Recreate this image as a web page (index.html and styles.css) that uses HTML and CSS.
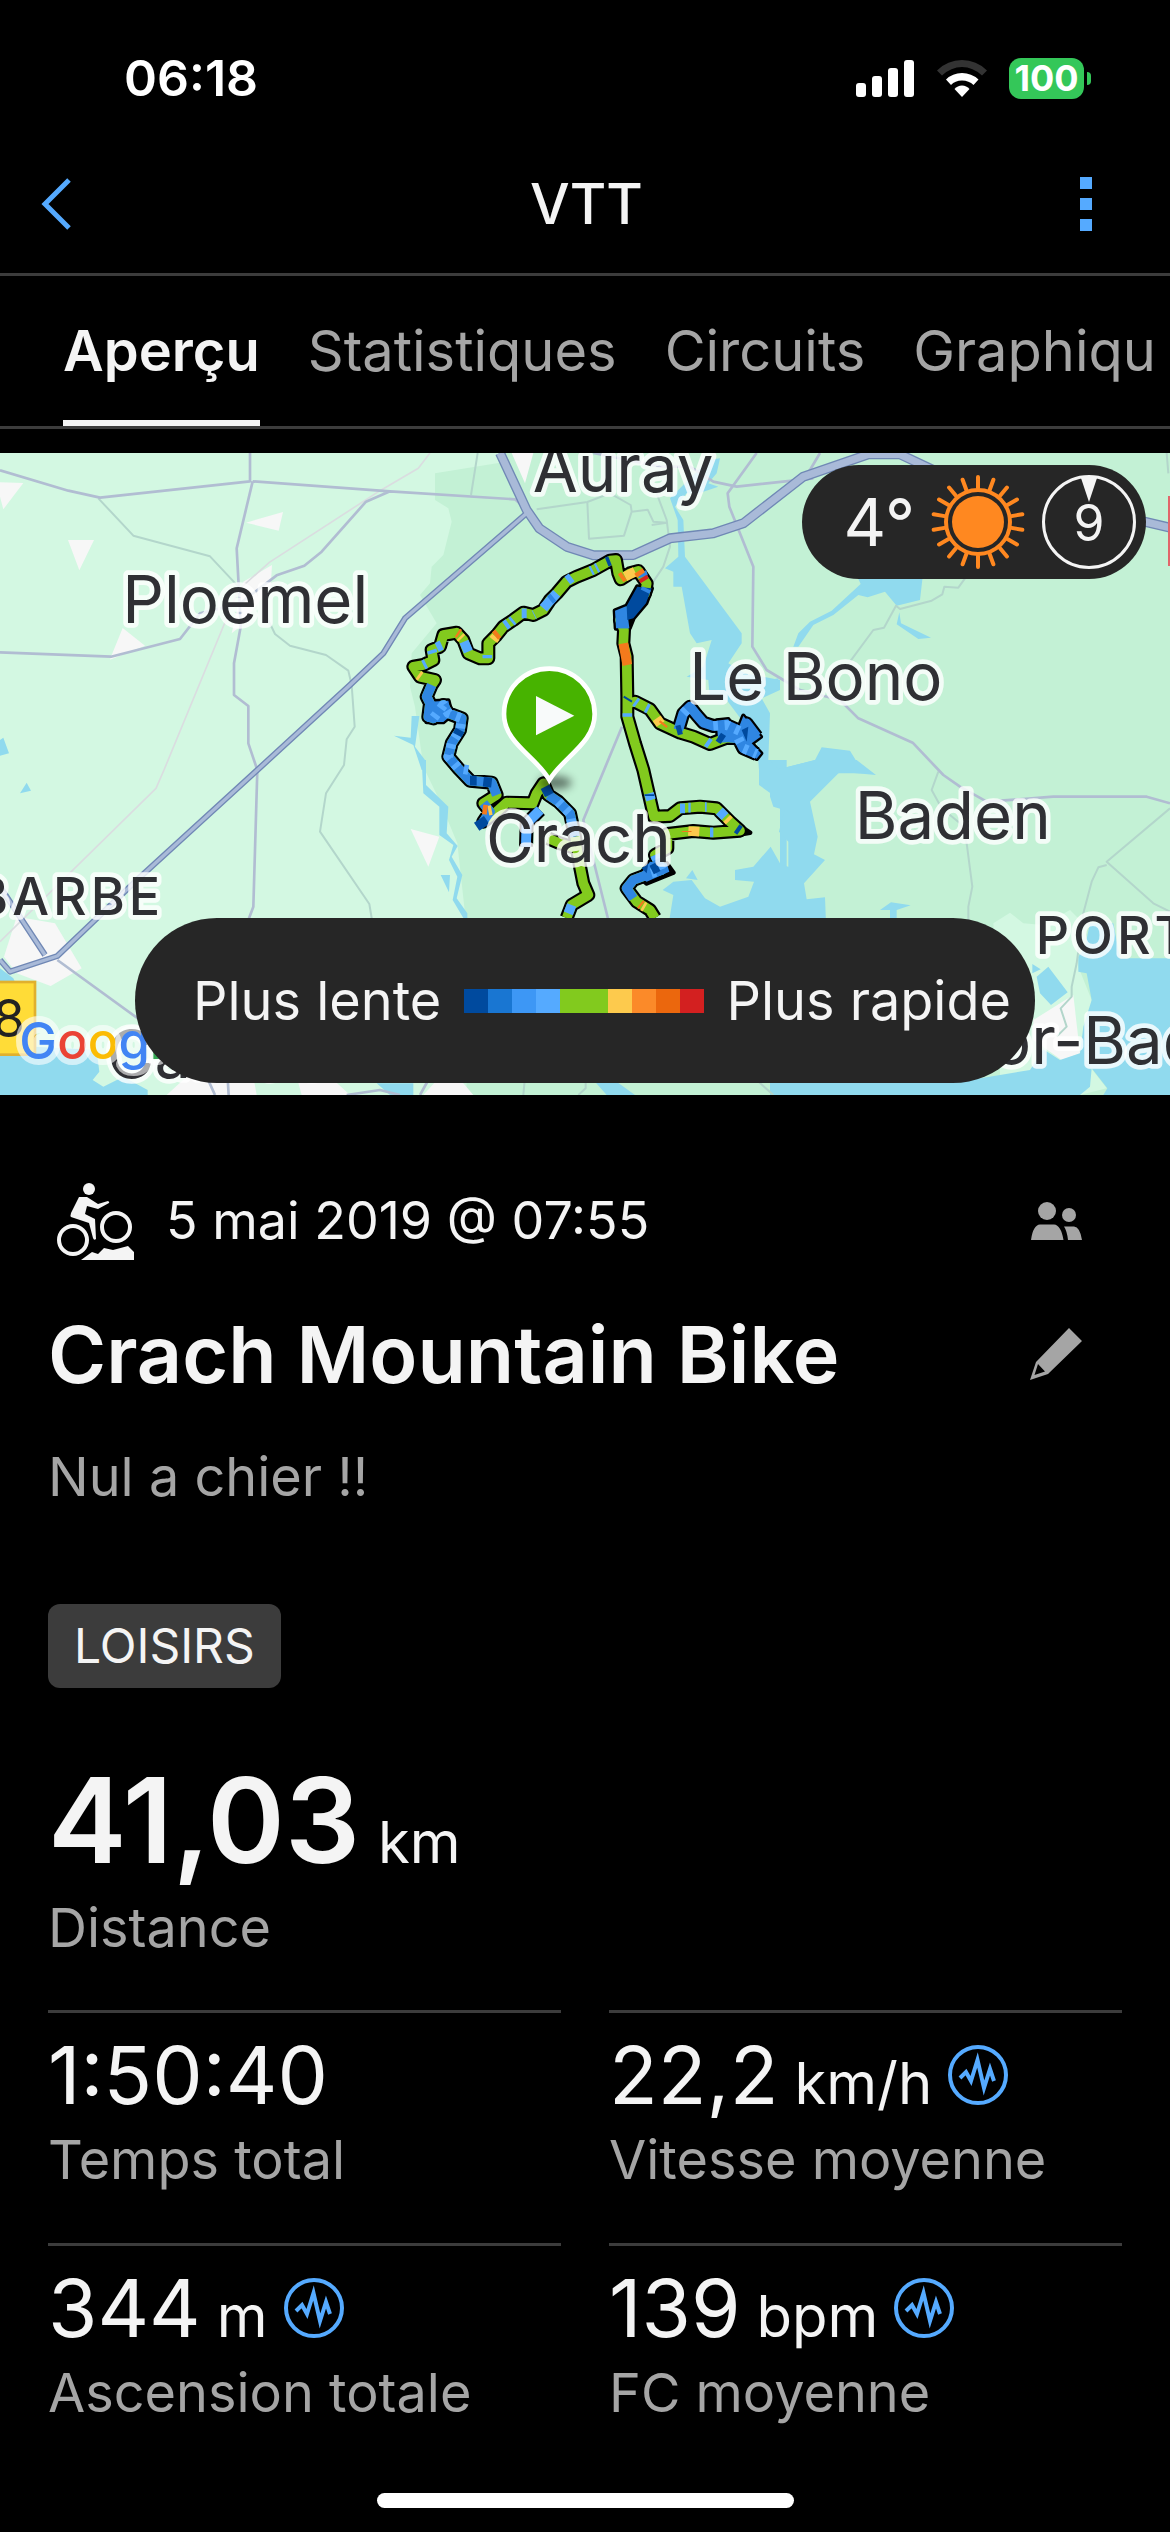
FILE: index.html
```html
<!DOCTYPE html>
<html lang="fr">
<head>
  <meta charset="UTF-8">
  <meta name="viewport" content="width=device-width">
  <title>VTT</title>
  <link rel="stylesheet" href="styles.css">
</head>
<body>
  <div class="status-bar">
    <span class="time">06:18</span>
    <div class="status-icons">
      <svg class="signal" viewBox="0 0 58 37" width="58" height="37" fill="#fff">
        <rect x="0" y="23" width="10" height="14" rx="3" />
        <rect x="16" y="16" width="10" height="21" rx="3" />
        <rect x="32" y="8" width="10" height="29" rx="3" />
        <rect x="48" y="0" width="10" height="37" rx="3" />
      </svg>
      <svg class="wifi" viewBox="0 0 50 37" width="50" height="37">
        <path d="M0 10.500Q10.500 0 25 0T50 10.500L45 15.500Q36 7 25 7T5 15.500Z" fill="#333" />
        <path d="M9 19.500Q15.500 13 25 13T41.500 19.500L36.500 25Q32 20.500 25 20.500T14 25Z" fill="#fff" />
        <path d="M17.500 29Q20.500 25.500 25 25.500T32.500 29L25 37Z" fill="#fff" />
      </svg>
      <span class="battery">100</span>
      <span class="battery-tip"></span>
    </div>
  </div>

  <header class="top-bar">
    <button class="icon-btn" aria-label="Retour">
      <svg viewBox="0 0 30 52" width="30" height="52" fill="none" stroke="#55aaff" stroke-width="5">
        <path d="M28 2L4 26L28 50" />
      </svg>
    </button>
    <h1>VTT</h1>
    <button class="icon-btn" aria-label="Menu">
      <svg viewBox="0 0 12 54" width="12" height="54" fill="#55aaff">
        <path d="M0 0h12v12H0zM0 21h12v12H0zM0 42h12v12H0z" />
      </svg>
    </button>
  </header>

  <nav class="tabs">
    <a class="tab active" href="#">Aperçu</a>
    <a class="tab" href="#">Statistiques</a>
    <a class="tab" href="#">Circuits</a>
    <a class="tab" href="#">Graphiqu</a>
  </nav>

  <section class="map">
    <svg class="map-canvas" viewBox="0 1359 3510 1926">
      <rect class="land" x="0" y="1359" width="3510" height="1926" />
      <path class="forest" d="M1305 1420L1500 1388V1359H3510V3285H1400L1395 2740L1372 2530L1318 2400L1270 2300L1245 2120L1230 2060L1235 1960L1310 1870L1260 1785L1290 1750L1295 1700L1330 1665L1355 1565L1345 1525L1305 1500Z" />
      <path class="land" d="M2980 2770L3030 2738L3070 2770L3130 2775L3210 2730L3240 2760L3235 2900L3275 3000L3270 3200L3320 3265L3240 3285H3000V3050Z" />

      <!-- built-up areas -->
      <g class="town">
        <path d="M0 1447L70 1449L10 1528L0 1490ZM204 1620H282L238 1711ZM738 1568L849 1536L836 1592ZM333 1970L368 1884L435 1937L330 1979ZM730 1745L816 1695L812 1760L720 1880L695 1900Z" />
        <path d="M50 2750L165 2770L245 2905L152 2958L50 2920L12 2870Z" />
        <path d="M1535 1359H1600L1575 1450ZM1232 2487L1318 2510L1285 2600ZM500 3285L560 3230H760L770 3285ZM890 3230H990L1050 3285H905Z" />
        <path d="M1270 3285L1320 3230L1390 3250L1420 3285ZM3100 3060L3220 2985L3240 3160L3185 3180L3100 3120Z" />
      </g>

      <!-- water -->
      <g class="water">
        <path transform="translate(1140 1320)" d="M985 60L1020 55L1010 100L985 130L1015 140L950 162L920 160L885 200L910 240L915 350L1085 580V610L1045 670L1095 700L1200 720V750L1145 775L1170 820L1165 960L1200 990H1137L1130 900L1040 780H990L985 720L920 710L970 680L995 600L950 610L930 580L905 440H880V395L855 385L895 350L893 240L870 175Z" />
        <path transform="translate(1140 1320)" d="M95 828H118L105 920L135 960V990H125L100 915L42 887L92 893Z" />
        <path transform="translate(2310 1320)" d="M262 410H458L450 480L380 497L345 455L293 472L265 465L190 525L130 555L85 620H70L85 580L120 545L185 512L272 432ZM388 517L393 550L483 593L445 597L380 553ZM0 1000V968L25 988L135 960L155 922L240 932L262 968L300 1000ZM0 720L25 715V745L0 760Z" />
        <path transform="translate(0 2280)" d="M0 625L40 655L60 700V860L105 860L290 870L298 935L278 960L310 980L370 950L443 990V1005H0ZM60 100L80 68L93 92ZM0 -60L10 -67L27 -20L0 -13ZM1130 970H1240V1005H1170Z" />
        <path transform="translate(1140 2280)" d="M125 0H138V75L205 140L200 220L233 258L215 290L247 345L230 415L262 460V474H250L218 420L232 350L207 300L220 255L178 225V140L130 100ZM182 345H210L207 397ZM918 355L937 330L953 360ZM645 965H710L765 1005H680Z" />
        <path transform="translate(1140 2280)" d="M1137 0H1220V480H868L880 405L848 390L880 365L935 360L975 415L1020 440L1105 410L1122 365L1065 360V330L1120 320L1172 260L1200 310V120L1137 75Z" />
        <path transform="translate(2310 2280)" d="M0 0L25 28L135 0H260L318 45L210 35L120 125L143 230L132 283L165 300L102 370L110 418L165 412L168 490H0V260L20 310L55 320V245L27 215L43 150L10 140L0 110ZM330 450L363 427L422 436L380 450V480H360V450ZM800 650L835 620L893 697L843 735L810 700ZM787 612L812 628L787 640Z" />
        <path transform="translate(2310 2280)" d="M925 635L950 640L965 720L940 800L930 880L870 900L820 868L780 930L600 960L0 965V1005H930L960 980L965 925L1012 985L1000 1005H1200V595H1050L1030 490H960L945 560L925 590Z" />
      </g>

      <!-- small roads -->
      <g class="road-minor">
        <path d="M295 1495L400 1607L630 1669L720 1765M800 1850L825 1902L870 1937L978 1965L1045 2012L1055 2055L1064 2180L1040 2218L1032 2295L978 2380L960 2495L1108 2712L1116 2760" />
        <path d="M1433 1359L1413 1485M1610 1528L1762 1506L1830 1480L1892 1515L1895 1535L1872 1607L1767 1616L1762 1506M1895 1535L1943 1529L1960 1565L2000 1568L1955 1575M1970 1480L2000 1560L2010 1640L1990 1700L1950 1760" />
        <path d="M2895 1735L2875 1763L2833 1760L2827 1783L2795 1802L2700 1827L2688 1817L2652 1883L2620 1890L2550 1985M3500 1359L3505 1420M2815 2315L2795 2370L2825 2425L2880 2470L2900 2530L2917 2660L2905 2720V2760" />
        <path d="M3510 2425L3320 2585L3460 2710L3510 2735M3320 2595L3295 2602L3275 2645L3250 2740L3230 2890L3215 2960V2990L3182 3025L3200 3080L3170 3110M1575 3230L1570 3285M1757 3230V3265L1735 3285M2270 3240L2320 3285" />
      </g>
      <g class="road-rail">
        <path d="M1290 1359L1255 1405L1140 1472L808 1687L715 1770L492 2310L468 2365L0 2825" />
      </g>

      <!-- main roads -->
      <g class="road">
        <path d="M0 1411L205 1472L300 1493L750 1444L750 1359M758 1444L1170 1474L1545 1498L1570 1520M758 1444L710 1645L720 1830L722 1880L702 1990V2085L745 2118V2230L772 2310L760 2720L745 2760M1170 1474L1098 1505L965 1655L913 1697L830 1726L720 1810L600 1840L540 1917L333 1970L0 1957" />
        <path d="M2270 1359L2183 1480L2188 1520L2260 1700L2257 1940L2300 2010L2400 2070L2520 2100L2575 2155L2738 2228L2830 2325L2880 2360L2960 2405L3160 2390H3440L3510 2410M1866 2180L1750 2460L1825 2760" />
        <path d="M1780 1359L1980 1400L2070 1400L2140 1445L2210 1460L2440 1435M2460 1359L2430 1410L2370 1470M172 2880L420 3060M1040 3285L1140 3270L1200 3285M620 3230L645 3285M683 3235L686 3285M1260 3285L1285 3240" />
      </g>
      <g class="road-case">
        <path d="M1500 1359L1580 1530L1618 1585L1700 1640L1780 1666L1900 1665L2010 1615L2140 1600L2230 1570L2410 1430L2605 1363H2700L2800 1410M3420 1562L3510 1583" stroke-width="30" />
        <path d="M1580 1540L1215 1855L1150 1960L1050 2055L772 2310L400 2650L172 2868L30 2915L0 2880M0 2660L135 2865" stroke-width="18" />
      </g>
      <g class="road-main">
        <path d="M1500 1359L1580 1530L1618 1585L1700 1640L1780 1666L1900 1665L2010 1615L2140 1600L2230 1570L2410 1430L2605 1363H2700L2800 1410M3420 1562L3510 1583" stroke-width="22" />
        <path d="M1580 1540L1215 1855L1150 1960L1050 2055L772 2310L400 2650L172 2868L30 2915L0 2880M0 2660L135 2865" stroke-width="10" />
      </g>
      <rect x="3504" y="1488" width="10" height="210" fill="#e2656a" />
      <rect x="-60" y="2946" width="165" height="218" fill="#ffdc37" stroke="#e0b02e" stroke-width="8" />
      <text class="road-number" x="-22" y="3112">8</text>

      <!-- GPS track -->
      <g transform="translate(1140 1320)">
        <g class="track-outline">
          <path d="M560 1434L575 1395L625 1365L610 1330L600 1280L585 1190L570 1120L535 1085L505 1065L490 1030L470 1060L458 1090L380 1088L350 1115L310 1145L330 1115L310 1090L350 1065L335 1028L270 1022L235 985L205 950L215 910L240 870L245 835L205 820L190 795L160 835L145 830L150 790L140 770L155 735L165 720L120 710L100 680L130 675L160 660L155 630L180 620L190 585L230 578L250 600L265 640L300 655L325 655L325 610L350 585L370 560L400 540L430 518L460 525L490 510L510 480L530 460L560 425L590 410L640 390L690 362L708 360L715 400L722 418L750 400L775 393L800 430L795 460L770 490L740 520L720 540L732 570L730 610L740 650L742 770L742 830L765 910L790 990L822 1130L870 1128L900 1105L960 1100L1010 1105L1050 1145L1080 1172L1000 1178L940 1173L862 1182V1225L825 1245L845 1290L800 1305L760 1320L740 1345L770 1385L810 1410L825 1434" />
          <path d="M745 790L765 785L810 808L840 850L900 878L940 890L990 912L1040 893L1075 895L1090 925L1130 942M895 870L910 820L930 800L950 825L970 848L1000 858L1040 855L1095 880L1100 850L1130 890M480 1110L440 1150L438 1220M505 1195L540 1210L590 1225" />
          <path class="knot-outline" d="M1010 842L1045 838L1052 866H1075L1090 828L1142 890L1115 910L1143 940L1130 956L1085 935L1070 905L1015 908ZM148 785L205 782L215 825L190 846H140ZM705 512L740 498L772 440L815 445L798 490L760 535L748 565H708ZM1075 1155L1110 1178L1070 1185ZM810 1265L860 1270L880 1298L800 1330L775 1310Z" />
        </g>
        <g class="track">
          <path class="t-green" d="M560 1434L575 1395L625 1365L610 1330L600 1280L585 1190L570 1120L535 1085L505 1065L490 1030L470 1060L458 1090L380 1088L350 1115L310 1145L330 1115L310 1090L350 1065L335 1028L270 1022L235 985L205 950L215 910L240 870L245 835L205 820L190 795L160 835L145 830L150 790L140 770L155 735L165 720L120 710L100 680L130 675L160 660L155 630L180 620L190 585L230 578L250 600L265 640L300 655L325 655L325 610L350 585L370 560L400 540L430 518L460 525L490 510L510 480L530 460L560 425L590 410L640 390L690 362L708 360L715 400L722 418L750 400L775 393L800 430L795 460L770 490L740 520L720 540L732 570L730 610L740 650L742 770L742 830L765 910L790 990L822 1130L870 1128L900 1105L960 1100L1010 1105L1050 1145L1080 1172L1000 1178L940 1173L862 1182V1225L825 1245L845 1290L800 1305L760 1320L740 1345L770 1385L810 1410L825 1434" />
          <path class="t-green" d="M745 790L765 785L810 808L840 850L900 878L940 890L990 912L1040 893L1075 895M505 1195L540 1210L590 1225" />
          <path class="t-blue" d="M350 1065L335 1028L270 1022L235 985L205 950L215 910L240 870L245 835L205 820L190 795L160 835L145 830L150 790L140 770L155 735M310 1145L330 1115L310 1090M585 1190L570 1120L535 1085L505 1065M480 1110L440 1150L438 1220M895 870L910 820L930 800L950 825L970 848L1000 858L1040 855L1095 880L1100 850L1130 890M1050 893L1075 895L1090 925L1130 942M825 1245L845 1290L800 1305L760 1320L740 1345L760 1375" />
          <path class="knot" d="M1010 842L1045 838L1052 866H1075L1090 828L1142 890L1115 910L1143 940L1130 956L1085 935L1070 905L1015 908ZM148 785L205 782L215 825L190 846H140ZM810 1265L860 1270L868 1295L800 1325L775 1310Z" />
          <path class="knot" d="M705 512L740 498L748 565H708Z" />
          <path class="knot-dark" d="M740 498L772 440L815 445L798 490L760 535L742 540ZM1085 870L1105 860L1100 905ZM785 1285L805 1270L800 1300Z" />
          <path class="t-light" stroke-dasharray="14 20" d="M265 990L235 985L205 950L215 910L240 870L245 835L205 820L190 795L160 835M575 1150L570 1120L535 1085M910 820L930 800M1000 858L1040 855L1095 880M1075 895L1090 925L1130 942M825 1245L845 1290L800 1305" />
          <path class="t-light" d="M130 675L138 671M158 640L155 630M170 622L185 615M252 605L265 635M322 645V655M375 557L385 550M394 545L400 540M425 520L440 520M462 525L464 524M490 505L530 460M562 422L575 412M632 393L638 390M648 385L654 382M765 785L772 790M798 803L806 807M742 820V830M980 905L990 912M807 1060L813 1080M900 1105H915M925 1103H932M975 1101H980M1018 1113L1035 1130M990 1177H1000M480 1110L440 1150L438 1220M565 1420L575 1395" />
          <path class="t-dark" d="M680 366L690 362M240 870L232 885M335 1028L310 1025M290 1022L270 1022M495 1040L508 1065M890 872L905 868M1015 890L1030 900M320 1140L290 1160M815 1290L835 1280M1070 1165L1080 1172M745 775L742 780M808 1063V1068" />
          <path class="t-blue" d="M720 540L730 530M732 560V565M785 395L790 410M800 445L795 455M510 480L520 472" />
          <path class="t-yellow" d="M115 705L122 710M240 590L245 595M340 600L348 590M735 410L765 395M830 835L842 852M925 1173L958 1175M1040 1135L1048 1143M325 1112L335 1110M788 1398L795 1402" />
          <path class="t-orange" d="M232 578L238 582M345 588L355 580M722 415L732 408M775 393L783 405M730 610L742 675M848 855L852 850M920 1173V1176M308 1108L322 1110M780 1392L785 1396" />
          <path class="t-red" d="M788 412L794 422" />
        </g>
      </g>

      <!-- place names -->
      <g class="place">
        <text x="1598" y="1475">Auray</text>
        <text x="367" y="1870">Ploemel</text>
        <text x="2068" y="2101">Le Bono</text>
        <text x="1458" y="2587">Crach</text>
        <text x="2564" y="2518">Baden</text>
        <text x="320" y="3234">Carnac</text>
        <text x="2976" y="3192">or-Baden</text>
      </g>
      <g class="place-caps">
        <text x="-78" y="2745">BARBE</text>
        <text x="3107" y="2862">PORT</text>
      </g>

      <!-- start pin -->
      <ellipse class="pin-shadow" cx="1665" cy="2348" rx="50" ry="20" />
      <path d="M1648 2340C1610 2270 1512 2230 1512 2142A136 136 0 0 1 1784 2142C1784 2230 1690 2270 1648 2340Z" fill="#47b300" stroke="#fff" stroke-width="14" />
      <path d="M1608 2088V2206L1723 2147Z" fill="#f8fafa" />

      <text class="google" x="58" y="3176"><tspan fill="#4285f4">G</tspan><tspan fill="#ea4335">o</tspan><tspan fill="#fbbc05">o</tspan><tspan fill="#4285f4">g</tspan><tspan fill="#34a853">l</tspan></text>
    </svg>

    <div class="weather">
      <span class="temp">4°</span>
      <svg class="sun" viewBox="-47 -47 94 94" width="94" height="94" fill="none" stroke="#ff8820" stroke-width="4">
        <circle r="26" fill="#ff8820" stroke="none" />
        <circle r="32" />
        <path id="rays" stroke-linecap="round" d="M0 -34V-45M0 34V45" />
        <use href="#rays" transform="rotate(20)" />
        <use href="#rays" transform="rotate(40)" />
        <use href="#rays" transform="rotate(60)" />
        <use href="#rays" transform="rotate(80)" />
        <use href="#rays" transform="rotate(100)" />
        <use href="#rays" transform="rotate(120)" />
        <use href="#rays" transform="rotate(140)" />
        <use href="#rays" transform="rotate(160)" />
      </svg>
      <span class="wind">
        <svg class="wind-arrow" viewBox="0 0 16 24" width="16" height="24"><path d="M0 0H16L8 24Z" fill="#f4f4f4" /></svg>
        9
      </span>
    </div>

    <div class="legend">
      <span>Plus lente</span>
      <div class="scale">
        <i class="c1"></i><i class="c2"></i><i class="c3"></i><i class="c4"></i><i class="c5"></i>
        <i class="c5"></i><i class="c6"></i><i class="c7"></i><i class="c8"></i><i class="c9"></i>
      </div>
      <span>Plus rapide</span>
    </div>
  </section>

  <main class="details">
    <div class="row">
      <svg class="bike" viewBox="0 0 80 78" width="80" height="78" fill="#f4f4f4">
        <circle cx="35" cy="7" r="6" />
        <path d="M25 15H33L44 22L54 19Q56 20 55 21L44 27L33 24L31 32L41 37L42 57Q40 59 39 56L35 41L17 35Q16 34 17 31Z" />
        <circle cx="19" cy="58" r="14" fill="none" stroke="#f4f4f4" stroke-width="4" />
        <circle cx="62" cy="45" r="14" fill="none" stroke="#f4f4f4" stroke-width="4" />
        <path d="M27 78L38 70L44 72L50 66L59 68L74 64L80 70V78Z" />
      </svg>
      <span class="date">5 mai 2019 @ 07:55</span>
      <button class="icon-btn end" aria-label="Confidentialité">
        <svg viewBox="0 0 51 38" width="51" height="38" fill="#a5a5a5">
          <circle cx="16" cy="9" r="9" />
          <circle cx="38" cy="13" r="7" />
          <path d="M0 38Q2 23 9 22.500H23Q30 23 32.500 38ZM33 24.500H43Q49 25 51 38H37Q36 29 33 24.500Z" />
        </svg>
      </button>
    </div>

    <div class="row title-row">
      <h2>Crach Mountain Bike</h2>
      <button class="icon-btn end" aria-label="Modifier">
        <svg viewBox="0 0 52 52" width="52" height="52" fill="#a5a5a5">
          <path fill-rule="evenodd" d="M39 0L52 13L18 46L0 52L6 34ZM8 36L4.500 47L15 43.500Z" />
        </svg>
      </button>
    </div>

    <p class="note">Nul a chier !!</p>
    <span class="tag">LOISIRS</span>

    <div class="stat-main">
      <div class="value-main"><strong>41,03</strong> <span class="unit">km</span></div>
      <div class="label">Distance</div>
    </div>

    <div class="stats">
      <div class="stat">
        <div class="value">1:50:40</div>
        <div class="label">Temps total</div>
      </div>
      <div class="stat">
        <div class="value">22,2 <span class="unit">km/h</span>
          <button class="icon-btn" aria-label="Graphique de vitesse">
            <svg class="wave" viewBox="0 0 60 60" width="60" height="60">
              <circle cx="30" cy="30" r="28" />
              <path id="pulse" d="M12 33L18 27L23 36L29.500 15L36 43L42 24L46 36" />
            </svg>
          </button>
        </div>
        <div class="label">Vitesse moyenne</div>
      </div>
      <div class="stat">
        <div class="value">344 <span class="unit">m</span>
          <button class="icon-btn" aria-label="Graphique d'altitude">
            <svg class="wave" viewBox="0 0 60 60" width="60" height="60">
              <circle cx="30" cy="30" r="28" />
              <use href="#pulse" />
            </svg>
          </button>
        </div>
        <div class="label">Ascension totale</div>
      </div>
      <div class="stat">
        <div class="value">139 <span class="unit">bpm</span>
          <button class="icon-btn" aria-label="Graphique de FC">
            <svg class="wave" viewBox="0 0 60 60" width="60" height="60">
              <circle cx="30" cy="30" r="28" />
              <use href="#pulse" />
            </svg>
          </button>
        </div>
        <div class="label">FC moyenne</div>
      </div>
    </div>
  </main>

  <div class="home-bar"></div>
</body>
</html>
```
FILE: styles.css
```css
* {
  box-sizing: border-box;
}
body {
  margin: 0;
  background: #000;
  color: #f4f4f4;
  font-family: Inter, "Liberation Sans", sans-serif;
  overflow-x: hidden;
}
h1, h2, p {
  margin: 0;
}
.icon-btn {
  display: flex;
  padding: 0;
  border: 0;
  background: none;
}
.end {
  margin-left: auto;
}

/* status bar */
.status-bar {
  display: flex;
  align-items: center;
  justify-content: space-between;
  height: 135px;
  padding: 21px 79px 0 124px;
  color: #fff;
}
.time {
  font-size: 50px;
  font-weight: 600;
}
.status-icons {
  display: flex;
  align-items: center;
}
.wifi {
  margin: 0 22px 0 23px;
}
.battery {
  width: 75px;
  height: 41px;
  border-radius: 12px;
  background: #34c759;
  font-size: 36px;
  line-height: 41px;
  font-weight: 700;
  text-align: center;
}
.battery-tip {
  width: 4px;
  height: 13px;
  margin-left: 3px;
  border-radius: 0 4px 4px 0;
  background: #34c759;
}

/* header */
.top-bar {
  display: flex;
  align-items: center;
  justify-content: space-between;
  height: 141px;
  padding: 0 78px 0 41px;
  border-bottom: 3px solid #3c3c3c;
}
.top-bar h1 {
  flex: 1;
  padding-left: 22px;
  font-size: 56px;
  font-weight: 500;
  text-align: center;
}

/* tabs */
.tabs {
  display: flex;
  gap: 48px;
  padding: 33px 0 0 63px;
  border-bottom: 3px solid #3c3c3c;
  overflow: hidden;
}
.tab {
  padding-bottom: 27px;
  border-bottom: 6px solid transparent;
  color: #a5a5a5;
  font-size: 56px;
  line-height: 84px;
  text-decoration: none;
}
.tab.active {
  border-color: #f4f4f4;
  color: #f4f4f4;
  font-weight: 600;
}

/* map */
.map {
  position: relative;
  margin-top: 24px;
}
.map-canvas {
  display: block;
  width: 100%;
}
.land {
  fill: #d3f8e2;
}
.forest {
  fill: #c3f1d5;
}
.town {
  fill: #f7f7f7;
}
.water {
  fill: #90daee;
}
.road, .road-minor, .road-rail, .road-case, .road-main {
  fill: none;
  stroke-linejoin: round;
}
.road {
  stroke: #b1bdd2;
  stroke-width: 8;
}
.road-minor {
  stroke: #b3d6cb;
  stroke-width: 6;
}
.road-rail {
  stroke: #dadde0;
  stroke-width: 5;
}
.road-case {
  stroke: #7088b5;
}
.road-main {
  stroke: #a9bad8;
}
.road-number {
  font-size: 156px;
  fill: #222;
}
.track-outline {
  fill: none;
  stroke: #000;
  stroke-width: 42;
  stroke-linejoin: round;
}
.track {
  fill: none;
  stroke-width: 29;
  stroke-linejoin: round;
}
.knot-outline {
  fill: #000;
  stroke-width: 14;
}
.knot {
  fill: #2f86e2;
}
.knot-dark {
  fill: #004a9e;
}
.t-green {
  stroke: #82ca1e;
}
.t-blue {
  stroke: #2f86e2;
}
.t-light {
  stroke: #55aaff;
}
.t-dark {
  stroke: #004a9e;
}
.t-yellow {
  stroke: #fdca4d;
}
.t-orange {
  stroke: #f47a1c;
}
.t-red {
  stroke: #d32020;
}
.place, .place-caps {
  fill: #2f3034;
  stroke: #fff;
  stroke-opacity: 0.8;
  stroke-width: 28;
  stroke-linejoin: round;
  paint-order: stroke;
  font-size: 196px;
}
.place-caps {
  font-size: 156px;
  font-weight: 500;
  letter-spacing: 12px;
}
.google {
  font-size: 152px;
  font-weight: 500;
  stroke: #fff;
  stroke-opacity: 0.6;
  stroke-width: 36;
  stroke-linejoin: round;
  paint-order: stroke;
}
.pin-shadow {
  fill: #000;
  opacity: 0.5;
  filter: blur(12px);
}

/* weather pill over the map */
.weather {
  position: absolute;
  top: 12px;
  right: 24px;
  display: flex;
  align-items: center;
  height: 114px;
  padding: 0 10px 0 42px;
  border-radius: 57px;
  background: #262626;
}
.temp {
  font-size: 66px;
}
.sun {
  margin: 0 17px 0 16px;
}
.wind {
  position: relative;
  width: 94px;
  height: 94px;
  border: 3px solid #f4f4f4;
  border-radius: 50%;
  font-size: 50px;
  line-height: 90px;
  text-align: center;
}
.wind-arrow {
  position: absolute;
  top: 0;
  left: 36px;
}

/* speed legend over the map */
.legend {
  position: absolute;
  left: 135px;
  right: 135px;
  bottom: 12px;
  display: flex;
  align-items: center;
  justify-content: space-between;
  height: 165px;
  padding: 0 24px 0 58px;
  border-radius: 82px;
  background: #262626;
  font-size: 54px;
  white-space: nowrap;
}
.scale {
  display: flex;
}
.scale i {
  width: 24px;
  height: 24px;
}
.c1 { background: #004a9e; }
.c2 { background: #1976d2; }
.c3 { background: #3d97f5; }
.c4 { background: #55aaff; }
.c5 { background: #82ca1e; }
.c6 { background: #fdca4d; }
.c7 { background: #fb8a29; }
.c8 { background: #eb670d; }
.c9 { background: #d32020; }

/* details */
.details {
  padding: 87px 48px 0;
}
.row {
  display: flex;
  align-items: center;
  padding-right: 40px;
}
.bike {
  margin-left: 6px;
}
.date {
  margin-left: 32px;
  font-size: 52px;
  line-height: 78px;
}
.title-row {
  margin-top: 46px;
}
.title-row h2 {
  font-size: 79px;
  line-height: 96px;
  font-weight: 600;
}
.note {
  margin: 39px 0 91px;
  color: #a5a5a5;
  font-size: 54px;
  line-height: 72px;
}
.tag {
  display: block;
  width: fit-content;
  padding: 0 26px;
  border-radius: 12px;
  background: #3c3c3c;
  font-size: 48px;
  line-height: 84px;
}
.stat-main {
  margin: 73px 0 46px;
}
.value-main, .value {
  display: flex;
  align-items: baseline;
}
.value-main {
  gap: 18px;
  height: 118px;
  font-size: 118px;
  line-height: 118px;
}
.value-main strong {
  font-weight: 600;
}
.unit {
  font-size: 58px;
  line-height: 72px;
}
.label {
  margin-top: 13px;
  color: #a5a5a5;
  font-size: 54px;
  line-height: 72px;
}
.stats {
  display: grid;
  grid-template-columns: 1fr 1fr;
  column-gap: 48px;
}
.stat {
  padding: 26px 0 47px;
  border-top: 3px solid #3c3c3c;
}
.value {
  gap: 16px;
  height: 72px;
  font-size: 80px;
  line-height: 72px;
}
.value .icon-btn {
  align-self: center;
}
.wave {
  fill: none;
  stroke: #55aaff;
  stroke-width: 4;
}
.home-bar {
  width: 417px;
  height: 15px;
  margin: 17px auto 24px;
  border-radius: 8px;
  background: #fff;
}
```
